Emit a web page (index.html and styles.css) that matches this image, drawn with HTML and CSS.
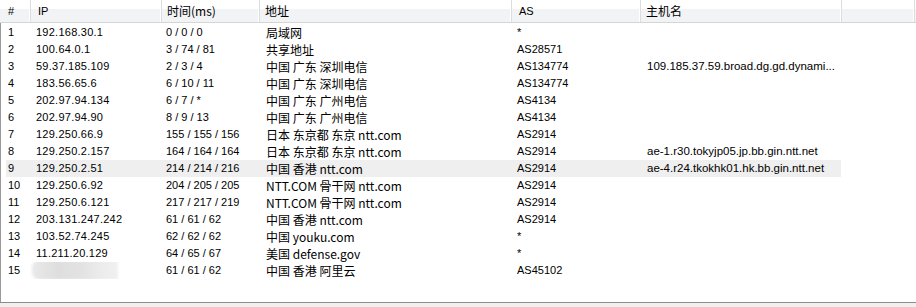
FILE: index.html
```html
<!DOCTYPE html>
<html lang="zh-CN">
<head>
  <meta charset="UTF-8">
  <title>路由追踪</title>
  <link rel="stylesheet" href="styles.css">
</head>
<body>

  <div class="trace">
    <div class="head">
      <div class="col">#</div>
      <div class="col">IP</div>
      <div class="col zh">时间(ms)</div>
      <div class="col zh">地址</div>
      <div class="col">AS</div>
      <div class="col zh">主机名</div>
      <div class="col"></div>
    </div>

    <div class="rows">
      <div class="row"><span>1</span><span class="ip">192.168.30.1</span><span>0 / 0 / 0</span><span class="addr">局域网</span><span>*</span><span class="host"></span></div>
      <div class="row"><span>2</span><span class="ip">100.64.0.1</span><span>3 / 74 / 81</span><span class="addr">共享地址</span><span>AS28571</span><span class="host"></span></div>
      <div class="row"><span>3</span><span class="ip">59.37.185.109</span><span>2 / 3 / 4</span><span class="addr">中国 广东 深圳电信</span><span>AS134774</span><span class="host">109.185.37.59.broad.dg.gd.dynami...</span></div>
      <div class="row"><span>4</span><span class="ip">183.56.65.6</span><span>6 / 10 / 11</span><span class="addr">中国 广东 深圳电信</span><span>AS134774</span><span class="host"></span></div>
      <div class="row"><span>5</span><span class="ip">202.97.94.134</span><span>6 / 7 / *</span><span class="addr">中国 广东 广州电信</span><span>AS4134</span><span class="host"></span></div>
      <div class="row"><span>6</span><span class="ip">202.97.94.90</span><span>8 / 9 / 13</span><span class="addr">中国 广东 广州电信</span><span>AS4134</span><span class="host"></span></div>
      <div class="row"><span>7</span><span class="ip">129.250.66.9</span><span>155 / 155 / 156</span><span class="addr">日本 东京都 东京 ntt.com</span><span>AS2914</span><span class="host"></span></div>
      <div class="row"><span>8</span><span class="ip">129.250.2.157</span><span>164 / 164 / 164</span><span class="addr">日本 东京都 东京 ntt.com</span><span>AS2914</span><span class="host">ae-1.r30.tokyjp05.jp.bb.gin.ntt.net</span></div>
      <div class="row sel"><span>9</span><span class="ip">129.250.2.51</span><span>214 / 214 / 216</span><span class="addr">中国 香港 ntt.com</span><span>AS2914</span><span class="host">ae-4.r24.tkokhk01.hk.bb.gin.ntt.net</span></div>
      <div class="row"><span>10</span><span class="ip">129.250.6.92</span><span>204 / 205 / 205</span><span class="addr">NTT.COM 骨干网 ntt.com</span><span>AS2914</span><span class="host"></span></div>
      <div class="row"><span>11</span><span class="ip">129.250.6.121</span><span>217 / 217 / 219</span><span class="addr">NTT.COM 骨干网 ntt.com</span><span>AS2914</span><span class="host"></span></div>
      <div class="row"><span>12</span><span class="ip">203.131.247.242</span><span>61 / 61 / 62</span><span class="addr">中国 香港 ntt.com</span><span>AS2914</span><span class="host"></span></div>
      <div class="row"><span>13</span><span class="ip">103.52.74.245</span><span>62 / 62 / 62</span><span class="addr">中国 youku.com</span><span>*</span><span class="host"></span></div>
      <div class="row"><span>14</span><span class="ip">11.211.20.129</span><span>64 / 65 / 67</span><span class="addr">美国 defense.gov</span><span>*</span><span class="host"></span></div>
      <div class="row"><span>15</span><span class="ip"><i class="blur"></i></span><span>61 / 61 / 62</span><span class="addr">中国 香港 阿里云</span><span>AS45102</span><span class="host"></span></div>
    </div>

    <div class="status"></div>
  </div>

</body>
</html>
```

FILE: styles.css
```css
body {
  margin: 0;
  background-color: #fff;
  font-family: "Liberation Sans", "Noto Sans CJK SC", sans-serif;
  font-size: 11px;
  color: #000;
}

.trace {
  width: 916px;
  height: 307px;
  display: flex;
  flex-direction: column;
  overflow: hidden;
}

.head {
  display: grid;
  grid-template-columns: 31px 131px 98px 252px 129px 201px 73px;
  height: 22px;
  border-bottom: 1px solid #d5d5d5;
  background: linear-gradient(#fff 0, #fff 40%, #f2f3f5 41%, #f2f3f5 100%);
}

.head .col {
  line-height: 22px;
  padding-left: 7px;
  border-right: 1px solid #dcdddf;
  box-shadow: inset -1px 0 0 #fff;
  white-space: nowrap;
}

.head .col:first-child { padding-left: 8px; }

.head .zh {
  font-family: "Noto Sans CJK SC", sans-serif;
  font-size: 12px;
  padding-left: 5px;
}

.rows {
  flex: 1;
  padding-top: 1px;
  border-left: 1px solid #9a9a9a;
}

.row {
  display: grid;
  grid-template-columns: 24px 131px 98px 252px 129px 201px;
  margin-left: 5px;
  width: 835px;
  height: 17px;
  line-height: 17px;
  white-space: nowrap;
}

.row span {
  padding-left: 6px;
  overflow: hidden;
}

.row span:first-child { padding-left: 2px; }

.row span:nth-child(3) { padding-left: 5px; }

.row .ip { letter-spacing: 0.25px; }

.row .addr {
  font-family: "Noto Sans CJK SC", sans-serif;
  font-size: 12px;
  padding-left: 7px;
}

.row .host {
  font-size: 11.5px;
  padding-left: 7px;
}

.row.sel { background-color: #efefef; }

.blur {
  display: inline-block;
  width: 86px;
  height: 20px;
  margin-left: -4px;
  margin-top: -2px;
  vertical-align: top;
  border-radius: 8px 0 0 8px;
  background: linear-gradient(90deg, #e9e9e9 0, #dedede 30%, #e3e3e3 60%, #ececec 80%, #f0f0f0 100%);
  filter: blur(1.5px);
}

.status {
  height: 4px;
  border-top: 1px solid #8c8c8c;
  background-color: #f0f0f0;
}
```
